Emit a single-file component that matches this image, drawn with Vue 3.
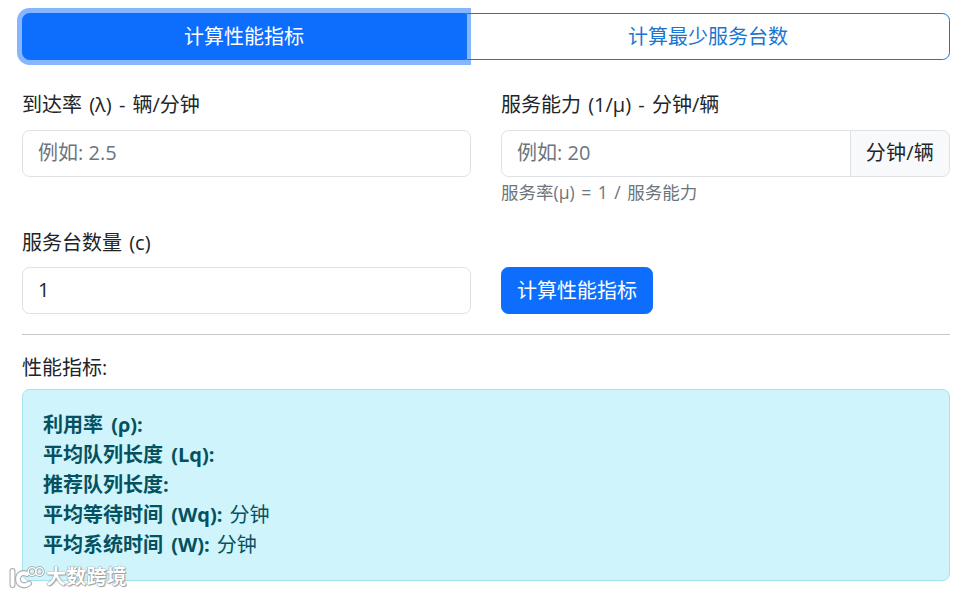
<script setup>
const metrics = [
  { label: '利用率 (ρ):', value: '' },
  { label: '平均队列长度 (Lq):', value: '' },
  { label: '推荐队列长度:', value: '' },
  { label: '平均等待时间 (Wq):', value: '分钟' },
  { label: '平均系统时间 (W):', value: '分钟' }
]
</script>

<template>
  <div class="page">
    <div class="tabs">
      <button class="tab active" type="button">计算性能指标</button>
      <button class="tab" type="button">计算最少服务台数</button>
    </div>

    <div class="grid">
      <div class="field">
        <label class="label">到达率 (λ) - 辆/分钟</label>
        <input class="control" type="text" placeholder="例如: 2.5" />
      </div>
      <div class="field">
        <label class="label">服务能力 (1/μ) - 分钟/辆</label>
        <div class="group">
          <input class="control joined" type="text" placeholder="例如: 20" />
          <span class="addon">分钟/辆</span>
        </div>
        <div class="hint">服务率(μ) = 1 / 服务能力</div>
      </div>
      <div class="field">
        <label class="label lower">服务台数量 (c)</label>
        <input class="control" type="text" value="1" />
      </div>
      <div class="field action">
        <button class="submit" type="button">计算性能指标</button>
      </div>
    </div>

    <hr class="rule" />

    <div class="result-title">性能指标:</div>
    <div class="result">
      <div v-for="m in metrics" :key="m.label" class="line">
        <strong>{{ m.label }}</strong><span v-if="m.value" class="unit">{{ m.value }}</span>
      </div>
    </div>

    <div class="watermark">
      <svg class="mark" width="38" height="24" viewBox="0 0 38 24" fill="none">
        <g stroke="#a9aeb2" stroke-linecap="round" stroke-linejoin="round">
          <path d="M4.5 6 V20" stroke-width="6" />
          <path d="M19 9 C14 6.5 10 9.5 10 14 C10 19.5 16 22.5 21 18.5" stroke-width="6" />
          <circle cx="24" cy="6.5" r="3.8" stroke-width="3.2" />
          <circle cx="31.5" cy="6.5" r="3.8" stroke-width="3.2" />
        </g>
        <g stroke="#ffffff" stroke-linecap="round" stroke-linejoin="round">
          <path d="M4.5 6 V20" stroke-width="3.8" />
          <path d="M19 9 C14 6.5 10 9.5 10 14 C10 19.5 16 22.5 21 18.5" stroke-width="3.8" />
          <circle cx="24" cy="6.5" r="3.8" stroke-width="1.3" />
          <circle cx="31.5" cy="6.5" r="3.8" stroke-width="1.3" />
        </g>
      </svg>
      <span class="wm-text">大数跨境</span>
    </div>
  </div>
</template>

<style>
html, body {
  margin: 0;
  background: #fff;
}
</style>

<style scoped>
.page {
  position: relative;
  box-sizing: border-box;
  width: 968px;
  height: 595px;
  overflow: hidden;
  padding: 13px 18px 0 22px;
  font-family: "Open Sans", "Noto Sans CJK SC", sans-serif;
  font-size: 20px;
  line-height: 30px;
  word-spacing: 2px;
  color: #212529;
}
.tabs {
  display: flex;
  margin-bottom: 30px;
}
.tab {
  flex: 1 1 auto;
  box-sizing: border-box;
  height: 47px;
  padding: 7px 15px;
  font: inherit;
  color: #1976d2;
  background: #fff;
  border: 1px solid #1976d2;
  border-radius: 0 7.5px 7.5px 0;
}
.tab.active {
  position: relative;
  z-index: 1;
  color: #fff;
  background: #0d6efd;
  border-color: #0d6efd;
  border-radius: 7.5px 0 0 7.5px;
  box-shadow: 0 0 0 5px rgba(13, 110, 253, 0.5);
}
.grid {
  display: grid;
  grid-template-columns: 449px 449px;
  column-gap: 30px;
}
.field {
  padding-bottom: 20px;
}
.action {
  display: flex;
  align-items: flex-end;
}
.label {
  display: block;
  margin-bottom: 10px;
}
.label.lower {
  margin-top: 1px;
  margin-bottom: 9px;
}
.control {
  display: block;
  box-sizing: border-box;
  width: 100%;
  height: 47px;
  padding: 6px 15px 8px;
  font: inherit;
  color: #212529;
  background: #fff;
  border: 1px solid #dee2e6;
  border-radius: 7.5px;
  outline: none;
}
.control::placeholder {
  color: #6c757d;
  opacity: 1;
}
.group {
  display: flex;
}
.joined {
  flex: 1 1 auto;
  min-width: 0;
  width: auto;
  border-radius: 7.5px 0 0 7.5px;
}
.addon {
  box-sizing: border-box;
  height: 47px;
  padding: 7px 15px;
  margin-left: -1px;
  letter-spacing: 0.25px;
  background: #f8f9fa;
  border: 1px solid #dee2e6;
  border-radius: 0 7.5px 7.5px 0;
  white-space: nowrap;
}
.hint {
  margin-top: 1.5px;
  margin-bottom: 2.5px;
  font-size: 17.5px;
  line-height: 26px;
  word-spacing: 2px;
  color: #6c757d;
}
.submit {
  box-sizing: border-box;
  height: 47px;
  padding: 7px 15px;
  font: inherit;
  color: #fff;
  background: #0d6efd;
  border: 1px solid #0d6efd;
  border-radius: 7.5px;
}
.rule {
  height: 0;
  margin: 0 0 18px;
  border: 0;
  border-top: 1px solid #c6c7c8;
}
.result-title {
  margin-bottom: 6px;
}
.result {
  box-sizing: border-box;
  padding: 20px;
  color: #055160;
  background: #cff4fc;
  border: 1px solid #a2e3ef;
  border-radius: 7.5px;
}
.line {
  height: 30px;
}
.line strong {
  word-spacing: 3px;
}
.unit {
  margin-left: 7px;
}
.watermark {
  position: absolute;
  left: 8px;
  top: 564px;
  display: flex;
  align-items: center;
}
.wm-text {
  font-size: 20px;
  font-weight: 700;
  line-height: 26px;
  letter-spacing: 0.2px;
  color: #fff;
  text-shadow: 0 0 1px #80858a, 0 0 1px #80858a, 1px 1px 1px #a0a5aa;
}
</style>
